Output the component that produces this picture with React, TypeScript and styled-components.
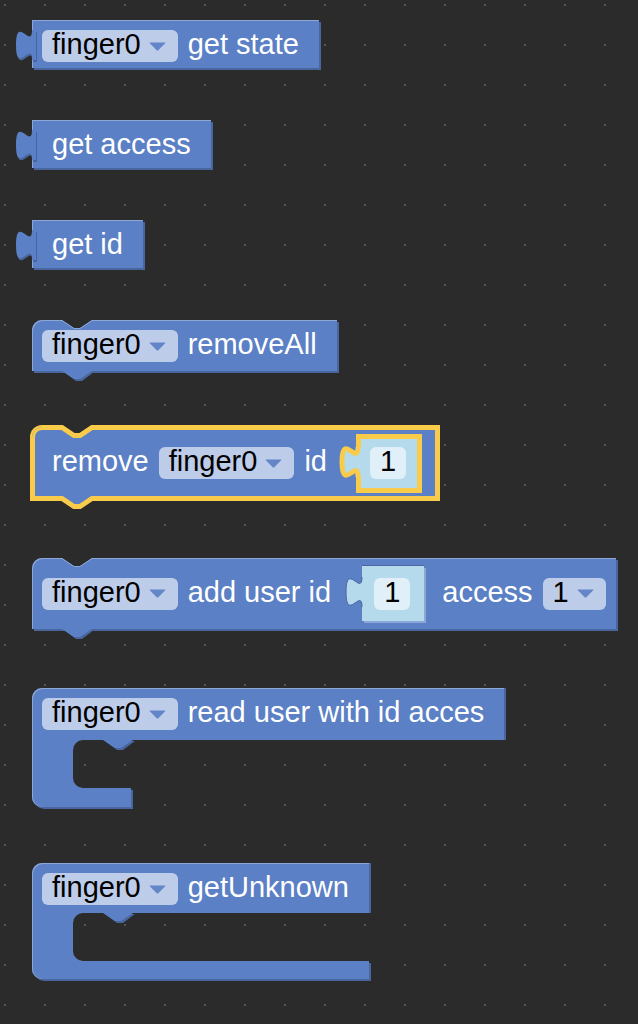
import React from "react";
import styled, { createGlobalStyle } from "styled-components";

const C = {
  bg: "#2b2b2b",
  dot: "#555555",
  block: "#5b80c5",
  light: "#8ca6d6",
  dark: "#49669e",
  field: "#bdcce8",
  arrow: "#6486c8",
  num: "#b5daec",
  numField: "#e1f0f8",
  sel: "#f8cb4a",
};

const GlobalStyle = createGlobalStyle`
  html, body { margin: 0; padding: 0; background: ${C.bg}; }
  body { font-family: "Liberation Sans", Arial, Helvetica, sans-serif; }
`;

const Workspace = styled.div`
  min-height: 1024px;
  box-sizing: border-box;
  padding: 20px 0 0 32px;
  display: flex;
  flex-direction: column;
  align-items: flex-start;
  background-color: ${C.bg};
  background-image: radial-gradient(circle at 5px 5px, ${C.dot} 0.8px, transparent 1.4px);
  background-size: 40px 40px;
  overflow: hidden;
`;

type BodyProps = {
  $mt: number;
  $h: number;
  $round?: boolean;
  $center?: boolean;
  $selected?: boolean;
};

const Body = styled.div<BodyProps>`
  position: relative;
  flex: none;
  margin-top: ${(p) => p.$mt}px;
  height: ${(p) => p.$h}px;
  box-sizing: border-box;
  display: flex;
  align-items: ${(p) => (p.$center ? "center" : "flex-start")};
  padding: ${(p) => (p.$center ? "0 10px" : "10px 10px 0")};
  background: ${C.block};
  border-top-left-radius: ${(p) => (p.$round ? 10 : 0)}px;
  box-shadow: ${(p) =>
    p.$selected
      ? `inset 0 0 0 3px ${C.sel}, 0 0 0 2px ${C.sel}`
      : `inset 1px 1px 0 ${C.light}, 2px 2px 0 ${C.dark}`};
`;

const Label = styled.span`
  display: block;
  flex: none;
  height: 32px;
  padding: 0 10px;
  color: #ffffff;
  font-size: 29px;
  line-height: 28px;
  white-space: nowrap;
`;

const DropBox = styled.div`
  display: flex;
  flex: none;
  align-items: flex-start;
  gap: 8px;
  height: 32px;
  box-sizing: border-box;
  padding: 0 12px 0 10px;
  border-radius: 6px;
  background: ${C.field};
`;

const FieldText = styled.span`
  color: #000000;
  font-size: 29px;
  line-height: 28px;
  white-space: nowrap;
`;

const ArrowSvg = styled.svg`
  display: block;
  flex: none;
  align-self: center;
`;

const Slot = styled.div`
  flex: none;
  display: flex;
  margin: 0 8px 0 5px;
  padding-left: 16px;
`;

const NumBlock = styled.div<{ $selected?: boolean }>`
  position: relative;
  height: 55px;
  box-sizing: border-box;
  display: flex;
  align-items: center;
  padding: 0 14px 0 12px;
  background: ${C.num};
  box-shadow: ${(p) =>
    p.$selected
      ? `inset 0 0 0 3px ${C.sel}, 0 0 0 2px ${C.sel}`
      : `0 -1px 0 ${C.dark}, 2px 2px 0 ${C.light}`};
`;

const NumField = styled.div`
  flex: none;
  height: 32px;
  padding: 0 10px;
  border-radius: 6px;
  background: ${C.numField};
`;

const Overlay = styled.svg<{ $left: number; $top: string }>`
  position: absolute;
  left: ${(p) => p.$left}px;
  top: ${(p) => p.$top};
  overflow: visible;
  display: block;
`;

const CWrap = styled.div<{ $mt: number }>`
  flex: none;
  margin-top: ${(p) => p.$mt}px;
  display: flex;
  flex-direction: column;
  align-items: flex-start;
`;

const CTop = styled.div<{ $h: number }>`
  position: relative;
  height: ${(p) => p.$h}px;
  box-sizing: border-box;
  display: flex;
  align-items: flex-start;
  padding: 10px 10px 0;
  background: ${C.block};
  border-top-left-radius: 10px;
  box-shadow: inset 1px 1px 0 ${C.light}, 2px 0 0 ${C.dark};
`;

const CMid = styled.div`
  display: flex;
  height: 48px;
`;

const CArm = styled.div`
  width: 41px;
  background: ${C.block};
  box-shadow: inset 1px 0 0 ${C.light};
`;

const CCorner = styled.div`
  position: relative;
  width: 10px;
  background: ${C.block};
  &::before {
    content: "";
    position: absolute;
    inset: 0;
    background: ${C.bg};
    border-radius: 10px 0 0 10px;
  }
`;

const CBottom = styled.div<{ $h: number; $full?: boolean }>`
  height: ${(p) => p.$h}px;
  width: ${(p) => (p.$full ? "auto" : "99px")};
  align-self: ${(p) => (p.$full ? "stretch" : "flex-start")};
  background: ${C.block};
  border-bottom-left-radius: 10px;
  box-shadow: inset 1px 0 0 ${C.light}, 2px 2px 0 ${C.dark};
`;

const Arrow = () => (
  <ArrowSvg width={17} height={9}>
    <path
      d="M1 0.5 H16 Q16.9 0.5 16.2 1.3 L9.3 8.2 Q8.5 9 7.7 8.2 L0.8 1.3 Q0.1 0.5 1 0.5 Z"
      fill={C.arrow}
    />
  </ArrowSvg>
);

const Dropdown = ({ value }: { value: string }) => (
  <DropBox>
    <FieldText>{value}</FieldText>
    <Arrow />
  </DropBox>
);

const TAB = "M 16 0 c 0 20 -16 -16 -16 15 s 16 -5 16 15";

const Tab = ({
  fill,
  top,
  selected,
  hole,
}: {
  fill: string;
  top: number;
  selected?: boolean;
  hole?: boolean;
}) => (
  <Overlay $left={-16} $top={`${top}px`} width={20} height={30}>
    {!selected && !hole && <path d={`${TAB} h 4 v -30 z`} fill={C.dark} transform="translate(1 2)" />}
    <path d={`${TAB} h 4 v -30 z`} fill={fill} />
    {selected && <path d={TAB} fill="none" stroke={C.sel} strokeWidth={5} />}
    {hole && <path d={TAB} fill="none" stroke={C.dark} strokeWidth={1} />}
  </Overlay>
);

const TopDip = ({ selected }: { selected?: boolean }) => (
  <Overlay $left={30} $top="0px" width={30} height={8}>
    {selected ? (
      <>
        <polygon points="0,-2.5 30,-2.5 30,0.5 18,8.5 12,8.5 0,0.5" fill={C.bg} />
        <polyline
          points="-3,0.5 0,0.5 12,8.5 18,8.5 30,0.5 33,0.5"
          fill="none"
          stroke={C.sel}
          strokeWidth={5}
        />
      </>
    ) : (
      <>
        <polygon points="0,-1 30,-1 30,0 18,8 12,8 0,0" fill={C.bg} />
        <polyline points="0,0.5 12,8.5 18,8.5 30,0.5" fill="none" stroke={C.light} strokeWidth={1} />
      </>
    )}
  </Overlay>
);

const BottomBump = ({ selected, left = 30 }: { selected?: boolean; left?: number }) => (
  <Overlay $left={left} $top="100%" width={30} height={8}>
    {selected ? (
      <>
        <polygon points="0,-3 30,-3 30,-0.5 18,7.5 12,7.5 0,-0.5" fill={C.block} />
        <polyline
          points="-3,-0.5 0,-0.5 12,7.5 18,7.5 30,-0.5 33,-0.5"
          fill="none"
          stroke={C.sel}
          strokeWidth={5}
        />
      </>
    ) : (
      <>
        <polygon points="2,1 14,10 20,10 32,1" fill={C.dark} />
        <polygon points="0,-1 30,-1 30,0 18,8 12,8 0,0" fill={C.block} />
      </>
    )}
  </Overlay>
);

const NumberBlock = ({ value, selected }: { value: string; selected?: boolean }) => (
  <Slot>
    <NumBlock $selected={selected}>
      <Tab fill={C.num} top={11} selected={selected} hole={!selected} />
      <NumField>
        <FieldText>{value}</FieldText>
      </NumField>
    </NumBlock>
  </Slot>
);

export default function App() {
  return (
    <>
      <GlobalStyle />
      <Workspace>
        <Body $mt={0} $h={48}>
          <Tab fill={C.block} top={10} />
          <Dropdown value="finger0" />
          <Label>get state</Label>
        </Body>

        <Body $mt={52} $h={48}>
          <Tab fill={C.block} top={10} />
          <Label>get access</Label>
        </Body>

        <Body $mt={52} $h={48}>
          <Tab fill={C.block} top={10} />
          <Label>get id</Label>
        </Body>

        <Body $mt={52} $h={51} $round>
          <TopDip />
          <Dropdown value="finger0" />
          <Label>removeAll</Label>
          <BottomBump />
        </Body>

        <Body $mt={56} $h={72} $round $center $selected>
          <TopDip selected />
          <Label>remove</Label>
          <Dropdown value="finger0" />
          <Label>id</Label>
          <NumberBlock value="1" selected />
          <BottomBump selected />
        </Body>

        <Body $mt={59} $h={71} $round $center>
          <TopDip />
          <Dropdown value="finger0" />
          <Label>add user id</Label>
          <NumberBlock value="1" />
          <Label>access</Label>
          <Dropdown value="1" />
          <BottomBump />
        </Body>

        <CWrap $mt={59}>
          <CTop $h={52}>
            <Dropdown value="finger0" />
            <Label>read user with id acces</Label>
            <BottomBump left={71} />
          </CTop>
          <CMid>
            <CArm />
            <CCorner />
          </CMid>
          <CBottom $h={19} />
        </CWrap>

        <CWrap $mt={56}>
          <CTop $h={50}>
            <Dropdown value="finger0" />
            <Label>getUnknown</Label>
            <BottomBump left={71} />
          </CTop>
          <CMid>
            <CArm />
            <CCorner />
          </CMid>
          <CBottom $h={18} $full />
        </CWrap>
      </Workspace>
    </>
  );
}
